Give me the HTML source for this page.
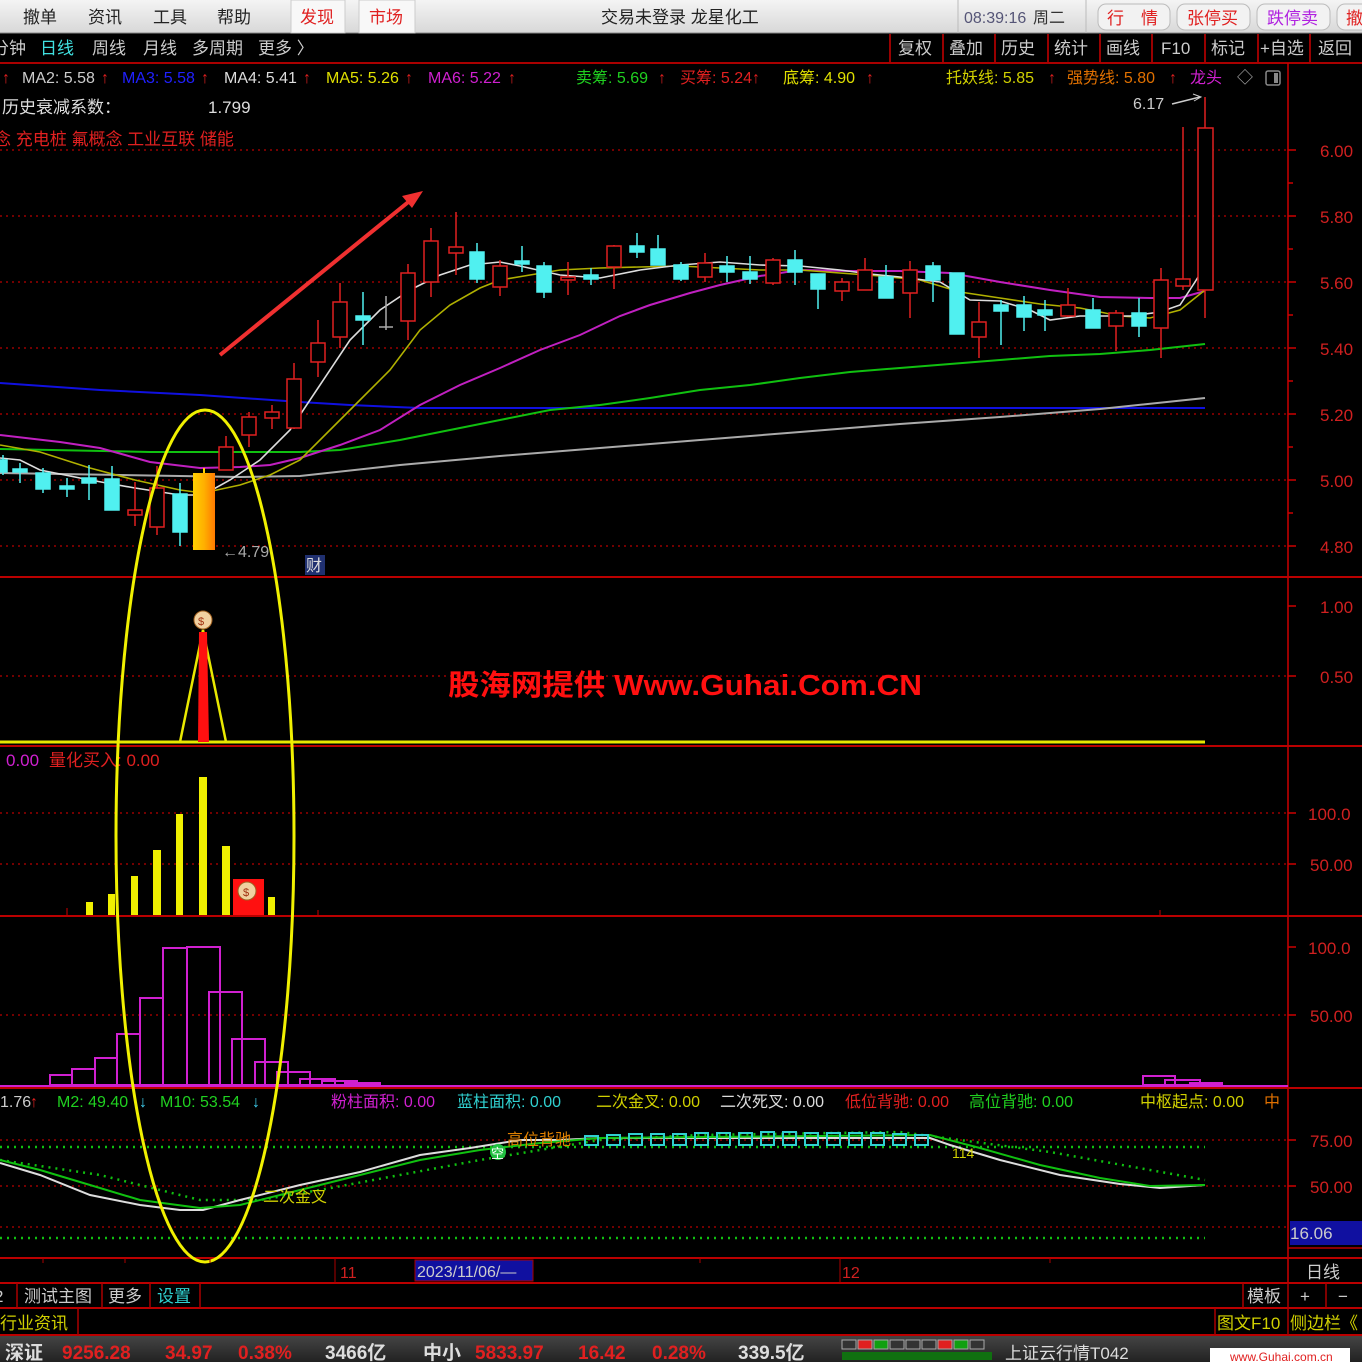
<!DOCTYPE html>
<html><head><meta charset="utf-8"><style>
html,body{margin:0;padding:0;background:#000;width:1362px;height:1362px;overflow:hidden}
svg{display:block}
text{font-family:"Liberation Sans","Noto Sans CJK SC",sans-serif}
</style></head><body>
<svg width="1362" height="1362" viewBox="0 0 1362 1362" xmlns="http://www.w3.org/2000/svg">
<defs>
<linearGradient id="tb" x1="0" y1="0" x2="0" y2="1"><stop offset="0" stop-color="#f4f4f4"/><stop offset="1" stop-color="#d8d8d8"/></linearGradient>
<linearGradient id="og" x1="0" y1="0" x2="1" y2="0"><stop offset="0" stop-color="#ffd000"/><stop offset="0.5" stop-color="#ffb000"/><stop offset="1" stop-color="#ff7a00"/></linearGradient>
<linearGradient id="sb" x1="0" y1="0" x2="0" y2="1"><stop offset="0" stop-color="#444"/><stop offset="1" stop-color="#222"/></linearGradient>
</defs>
<rect width="1362" height="1362" fill="#000"/>
<rect x="0" y="0" width="1362" height="33" fill="url(#tb)"/>
<line x1="0" y1="33" x2="1362" y2="33" stroke="#888"/>
<g font-size="17" fill="#222">
<text x="23" y="23">撤单</text><text x="88" y="23">资讯</text><text x="153" y="23">工具</text><text x="217" y="23">帮助</text>
</g>
<rect x="291" y="0" width="54" height="33" fill="#f8f8f8" stroke="#ccc"/>
<rect x="359" y="0" width="56" height="33" fill="#f8f8f8" stroke="#ccc"/>
<text x="300" y="23" font-size="17" fill="#e02020">发现</text>
<text x="369" y="23" font-size="17" fill="#e02020">市场</text>
<text x="601" y="23" font-size="17" fill="#222">交易未登录  龙星化工</text>
<line x1="958" y1="0" x2="958" y2="33" stroke="#bbb"/><line x1="1086" y1="0" x2="1086" y2="33" stroke="#bbb"/>
<text x="964" y="23" font-size="16" fill="#557">08:39:16</text><text x="1033" y="23" font-size="16" fill="#333">周二</text>
<g font-size="17">
<rect x="1098" y="4" width="72" height="26" rx="8" fill="#f2f2f2" stroke="#bbb"/><text x="1107" y="24" fill="#e02020">行　情</text>
<rect x="1177" y="4" width="73" height="26" rx="8" fill="#f2f2f2" stroke="#bbb"/><text x="1187" y="24" fill="#e02020">张停买</text>
<rect x="1257" y="4" width="73" height="26" rx="8" fill="#f2f2f2" stroke="#bbb"/><text x="1267" y="24" fill="#b020e0">跌停卖</text>
<rect x="1337" y="4" width="40" height="26" rx="8" fill="#f2f2f2" stroke="#bbb"/><text x="1346" y="24" fill="#e02020">撤</text>
</g>
<g font-size="17" fill="#ccc">
<text x="-8" y="54">分钟</text><text x="40" y="54" fill="#40e0e0">日线</text><text x="92" y="54">周线</text><text x="143" y="54">月线</text><text x="192" y="54">多周期</text><text x="258" y="54">更多 〉</text>
<text x="898" y="54">复权</text><text x="949" y="54">叠加</text><text x="1001" y="54">历史</text><text x="1054" y="54">统计</text><text x="1106" y="54">画线</text><text x="1161" y="54">F10</text><text x="1211" y="54">标记</text><text x="1260" y="54">+自选</text><text x="1318" y="54">返回</text>
</g>
<g stroke="#c00" stroke-width="1.5">
<line x1="890" y1="34" x2="890" y2="62"/><line x1="943" y1="34" x2="943" y2="62"/><line x1="995" y1="34" x2="995" y2="62"/><line x1="1048" y1="34" x2="1048" y2="62"/><line x1="1100" y1="34" x2="1100" y2="62"/><line x1="1152" y1="34" x2="1152" y2="62"/><line x1="1205" y1="34" x2="1205" y2="62"/><line x1="1258" y1="34" x2="1258" y2="62"/><line x1="1310" y1="34" x2="1310" y2="62"/>
</g>
<line x1="0" y1="63" x2="1362" y2="63" stroke="#a00" stroke-width="2"/>
<line x1="1288" y1="63" x2="1288" y2="1283" stroke="#c00" stroke-width="1.5"/>
<g stroke="#b00" stroke-width="2">
<line x1="0" y1="577" x2="1362" y2="577"/><line x1="0" y1="746" x2="1362" y2="746"/><line x1="0" y1="916" x2="1362" y2="916"/><line x1="0" y1="1088" x2="1362" y2="1088"/><line x1="0" y1="1258" x2="1362" y2="1258"/><line x1="0" y1="1283" x2="1362" y2="1283"/><line x1="0" y1="1308" x2="1362" y2="1308"/><line x1="0" y1="1335" x2="1362" y2="1335"/>
</g>
<g stroke="#900" stroke-width="1.5" stroke-dasharray="2,4">
<line x1="0" y1="150" x2="1288" y2="150"/><line x1="0" y1="216" x2="1288" y2="216"/><line x1="0" y1="282" x2="1288" y2="282"/><line x1="0" y1="348" x2="1288" y2="348"/><line x1="0" y1="414" x2="1288" y2="414"/><line x1="0" y1="480" x2="1288" y2="480"/><line x1="0" y1="546" x2="1288" y2="546"/>
<line x1="0" y1="676" x2="1288" y2="676"/>
<line x1="0" y1="813" x2="1288" y2="813"/><line x1="0" y1="864" x2="1288" y2="864"/>
<line x1="0" y1="1015" x2="1288" y2="1015"/>
<line x1="0" y1="1140" x2="1288" y2="1140"/><line x1="0" y1="1186" x2="1288" y2="1186"/><line x1="0" y1="1227" x2="1288" y2="1227"/>
</g>
<g font-size="17" fill="#d02020">
<text x="1320" y="157">6.00</text><text x="1320" y="223">5.80</text><text x="1320" y="289">5.60</text><text x="1320" y="355">5.40</text><text x="1320" y="421">5.20</text><text x="1320" y="487">5.00</text><text x="1320" y="553">4.80</text>
<text x="1320" y="613">1.00</text><text x="1320" y="683">0.50</text>
<text x="1308" y="820">100.0</text><text x="1310" y="871">50.00</text>
<text x="1308" y="954">100.0</text><text x="1310" y="1022">50.00</text>
<text x="1310" y="1147">75.00</text><text x="1310" y="1193">50.00</text>
</g>
<g stroke="#c00" stroke-width="1.5">
<line x1="1288" y1="150" x2="1296" y2="150"/><line x1="1288" y1="216" x2="1296" y2="216"/><line x1="1288" y1="282" x2="1296" y2="282"/><line x1="1288" y1="348" x2="1296" y2="348"/><line x1="1288" y1="414" x2="1296" y2="414"/><line x1="1288" y1="480" x2="1296" y2="480"/><line x1="1288" y1="546" x2="1296" y2="546"/>
<line x1="1288" y1="183" x2="1293" y2="183"/><line x1="1288" y1="249" x2="1293" y2="249"/><line x1="1288" y1="315" x2="1293" y2="315"/><line x1="1288" y1="381" x2="1293" y2="381"/><line x1="1288" y1="447" x2="1293" y2="447"/><line x1="1288" y1="513" x2="1293" y2="513"/>
<line x1="1288" y1="606" x2="1296" y2="606"/><line x1="1288" y1="676" x2="1296" y2="676"/><line x1="1288" y1="813" x2="1296" y2="813"/><line x1="1288" y1="864" x2="1296" y2="864"/><line x1="1288" y1="947" x2="1296" y2="947"/><line x1="1288" y1="1015" x2="1296" y2="1015"/><line x1="1288" y1="1140" x2="1296" y2="1140"/><line x1="1288" y1="1186" x2="1296" y2="1186"/>
</g>
<rect x="1290" y="1221" width="72" height="24" fill="#1010a0"/>
<text x="1290" y="1239" font-size="17" fill="#ccc">16.06</text>
<line x1="1288" y1="1248" x2="1362" y2="1248" stroke="#b00" stroke-width="1.5"/>
<g font-size="16">
<text x="2" y="83" fill="#e02020">↑</text>
<text x="22" y="83" fill="#ccc">MA2: 5.58</text><text x="101" y="83" fill="#e02020">↑</text>
<text x="122" y="83" fill="#2020ff">MA3: 5.58</text><text x="201" y="83" fill="#e02020">↑</text>
<text x="224" y="83" fill="#ddd">MA4: 5.41</text><text x="303" y="83" fill="#e02020">↑</text>
<text x="326" y="83" fill="#e0e000">MA5: 5.26</text><text x="405" y="83" fill="#e02020">↑</text>
<text x="428" y="83" fill="#d020d0">MA6: 5.22</text><text x="508" y="83" fill="#e02020">↑</text>
<text x="576" y="83" fill="#20d020">卖筹: 5.69</text><text x="658" y="83" fill="#e02020">↑</text>
<text x="680" y="83" fill="#e02020">买筹: 5.24↑</text>
<text x="783" y="83" fill="#e0e000">底筹: 4.90</text><text x="866" y="83" fill="#e02020">↑</text>
<text x="946" y="83" fill="#d0d000">托妖线: 5.85</text><text x="1048" y="83" fill="#e02020">↑</text>
<text x="1067" y="83" fill="#e07000">强势线: 5.80</text><text x="1169" y="83" fill="#e02020">↑</text>
<text x="1190" y="83" fill="#d020d0">龙头</text><text x="1237" y="83" fill="#aaa">◇</text>
</g>
<rect x="1266" y="71" width="14" height="14" rx="2" fill="none" stroke="#888" stroke-width="1.5"/><rect x="1274" y="73" width="4" height="10" fill="#888"/>
<text x="2" y="113" font-size="17" fill="#ddd">历史衰减系数：</text>
<text x="208" y="113" font-size="17" fill="#ddd">1.799</text>
<text x="-6" y="145" font-size="17" fill="#e02020">念 充电桩 氟概念 工业互联 储能</text>
<g fill="none" stroke-width="1.6">
<polyline stroke="#1010e0" stroke-width="2" points="0,383 100,390 200,395 300,402 350,405 420,408 600,408 800,408 1000,408 1205,408"/>
<polyline stroke="#aaa" stroke-width="2" points="0,473 240,477 300,476 400,465 500,456 600,448 700,440 800,432 900,424 1000,417 1100,409 1205,398"/>
<polyline stroke="#10c010" stroke-width="2" points="0,449 150,452 300,452 340,450 400,440 450,430 500,420 550,410 600,405 650,398 700,390 750,385 800,378 850,372 900,368 950,364 1000,360 1050,356 1100,354 1150,350 1205,344"/>
<polyline stroke="#c020c0" stroke-width="2" points="0,435 60,442 100,448 150,462 200,468 240,467 270,465 300,458 340,445 380,430 420,405 460,385 500,368 540,350 580,335 620,316 650,305 690,293 720,285 760,276 800,270 850,271 900,271 950,273 1000,282 1050,290 1100,297 1150,298 1180,298 1205,291"/>
<polyline stroke="#b0b000" points="0,445 40,452 90,468 135,480 180,490 203,493 240,485 270,475 300,460 330,430 360,400 390,370 420,330 450,305 480,288 500,280 530,275 560,270 600,268 640,267 680,266 720,268 760,270 800,270 840,273 880,276 920,280 960,292 1000,298 1040,304 1080,308 1120,316 1150,318 1180,310 1205,290"/>
<polyline stroke="#ddd" points="0,458 20,460 40,470 90,480 135,488 180,495 203,495 230,480 260,460 290,430 320,385 350,340 380,310 410,290 440,275 470,265 500,262 520,266 560,275 600,278 640,270 680,265 720,262 760,265 800,266 840,270 870,274 900,277 940,282 970,300 1000,301 1030,310 1050,320 1080,316 1130,316 1160,312 1180,305 1195,282 1205,266"/>
</g>
<g stroke-width="1.5">
<g stroke="#50f0f0" fill="#50f0f0">
<line x1="3" y1="455" x2="3" y2="475"/><rect x="-4" y="460" width="11" height="12"/>
<line x1="20" y1="463" x2="20" y2="483"/><rect x="13" y="469" width="14" height="3"/>
<line x1="43" y1="468" x2="43" y2="493"/><rect x="36" y="473" width="14" height="16"/>
<line x1="67" y1="478" x2="67" y2="497"/><rect x="60" y="486" width="14" height="3"/>
<line x1="89" y1="465" x2="89" y2="500"/><rect x="82" y="478" width="14" height="5"/>
<line x1="112" y1="466" x2="112" y2="510"/><rect x="105" y="479" width="14" height="31"/>
<line x1="180" y1="483" x2="180" y2="546"/><rect x="173" y="494" width="14" height="38"/>
<line x1="363" y1="292" x2="363" y2="345"/><rect x="356" y="316" width="14" height="4"/>
<line x1="477" y1="243" x2="477" y2="283"/><rect x="470" y="252" width="14" height="27"/>
<line x1="522" y1="246" x2="522" y2="272"/><rect x="515" y="261" width="14" height="3"/>
<line x1="544" y1="262" x2="544" y2="298"/><rect x="537" y="266" width="14" height="26"/>
<line x1="591" y1="268" x2="591" y2="285"/><rect x="584" y="275" width="14" height="4"/>
<line x1="637" y1="233" x2="637" y2="258"/><rect x="630" y="246" width="14" height="6"/>
<line x1="658" y1="235" x2="658" y2="265"/><rect x="651" y="249" width="14" height="16"/>
<line x1="681" y1="262" x2="681" y2="281"/><rect x="674" y="265" width="14" height="14"/>
<line x1="727" y1="256" x2="727" y2="282"/><rect x="720" y="266" width="14" height="6"/>
<line x1="750" y1="256" x2="750" y2="284"/><rect x="743" y="272" width="14" height="7"/>
<line x1="795" y1="250" x2="795" y2="285"/><rect x="788" y="260" width="14" height="12"/>
<line x1="818" y1="274" x2="818" y2="309"/><rect x="811" y="274" width="14" height="15"/>
<line x1="886" y1="265" x2="886" y2="298"/><rect x="879" y="277" width="14" height="21"/>
<line x1="933" y1="262" x2="933" y2="302"/><rect x="926" y="266" width="14" height="14"/>
<line x1="957" y1="273" x2="957" y2="334"/><rect x="950" y="273" width="14" height="61"/>
<line x1="1001" y1="300" x2="1001" y2="345"/><rect x="994" y="305" width="14" height="6"/>
<line x1="1024" y1="296" x2="1024" y2="331"/><rect x="1017" y="305" width="14" height="12"/>
<line x1="1045" y1="300" x2="1045" y2="331"/><rect x="1038" y="310" width="14" height="5"/>
<line x1="1093" y1="298" x2="1093" y2="328"/><rect x="1086" y="310" width="14" height="18"/>
<line x1="1139" y1="298" x2="1139" y2="337"/><rect x="1132" y="313" width="14" height="13"/>
</g>
<g stroke="#e02020" fill="#000">
<line x1="135" y1="482" x2="135" y2="526"/><rect x="128" y="510" width="14" height="5"/>
<line x1="157" y1="466" x2="157" y2="535"/><rect x="150" y="488" width="14" height="39"/>
<line x1="226" y1="436" x2="226" y2="470"/><rect x="219" y="447" width="14" height="23"/>
<line x1="249" y1="412" x2="249" y2="447"/><rect x="242" y="417" width="14" height="18"/>
<line x1="272" y1="405" x2="272" y2="429"/><rect x="265" y="412" width="14" height="6"/>
<line x1="294" y1="363" x2="294" y2="429"/><rect x="287" y="379" width="14" height="49"/>
<line x1="318" y1="320" x2="318" y2="377"/><rect x="311" y="343" width="14" height="19"/>
<line x1="340" y1="283" x2="340" y2="348"/><rect x="333" y="302" width="14" height="35"/>
<line x1="408" y1="264" x2="408" y2="340"/><rect x="401" y="273" width="14" height="48"/>
<line x1="431" y1="228" x2="431" y2="297"/><rect x="424" y="241" width="14" height="41"/>
<line x1="456" y1="212" x2="456" y2="275"/><rect x="449" y="247" width="14" height="6"/>
<line x1="500" y1="260" x2="500" y2="296"/><rect x="493" y="266" width="14" height="21"/>
<line x1="568" y1="262" x2="568" y2="295"/><rect x="561" y="277" width="14" height="3"/>
<line x1="614" y1="245" x2="614" y2="289"/><rect x="607" y="246" width="14" height="21"/>
<line x1="705" y1="253" x2="705" y2="282"/><rect x="698" y="263" width="14" height="14"/>
<line x1="773" y1="258" x2="773" y2="285"/><rect x="766" y="260" width="14" height="23"/>
<line x1="842" y1="278" x2="842" y2="301"/><rect x="835" y="282" width="14" height="9"/>
<line x1="865" y1="258" x2="865" y2="290"/><rect x="858" y="270" width="14" height="20"/>
<line x1="910" y1="261" x2="910" y2="318"/><rect x="903" y="270" width="14" height="23"/>
<line x1="979" y1="302" x2="979" y2="358"/><rect x="972" y="322" width="14" height="15"/>
<line x1="1068" y1="288" x2="1068" y2="317"/><rect x="1061" y="305" width="14" height="11"/>
<line x1="1116" y1="310" x2="1116" y2="351"/><rect x="1109" y="313" width="14" height="13"/>
<line x1="1161" y1="268" x2="1161" y2="358"/><rect x="1154" y="280" width="14" height="48"/>
<line x1="1183" y1="127" x2="1183" y2="290"/><rect x="1176" y="279" width="14" height="7"/>
<line x1="1205" y1="97" x2="1205" y2="318"/><rect x="1198" y="128" width="15" height="162"/>
</g>
<line x1="386" y1="296" x2="386" y2="330" stroke="#aaa"/><line x1="379" y1="327" x2="393" y2="327" stroke="#aaa"/>
<rect x="193" y="473" width="22" height="77" fill="url(#og)" stroke="none"/>
<line x1="204" y1="468" x2="204" y2="473" stroke="#ffd000" stroke-width="2"/>
</g>
<text x="222" y="557" font-size="16" fill="#aaa">←4.79</text>
<text x="1133" y="109" font-size="16" fill="#ccc">6.17</text>
<path d="M1172,104 L1200,97" stroke="#ccc" stroke-width="1.5" fill="none"/><path d="M1193,94 L1201,97 L1194,101" stroke="#ccc" fill="none"/>
<rect x="305" y="555" width="20" height="20" fill="#203070"/><text x="306" y="571" font-size="16" fill="#ddd">财</text>
<line x1="220" y1="355" x2="412" y2="199" stroke="#f03030" stroke-width="4"/>
<polygon points="423,191 402,196 412,208" fill="#f03030"/>
<line x1="0" y1="742" x2="1205" y2="742" stroke="#e8e800" stroke-width="3"/>
<polyline points="180,742 203,630 226,742" fill="none" stroke="#e8e800" stroke-width="2.5"/>
<polygon points="198,742 199,632 207,632 209,742" fill="#ff1010"/>
<circle cx="203" cy="620" r="9" fill="#f0d0a0" stroke="#a06020"/><text x="198" y="625" font-size="11" fill="#a03010">$</text>
<text x="448" y="695" font-size="29" font-weight="bold" fill="#ff1010" textLength="474" lengthAdjust="spacingAndGlyphs">股海网提供 Www.Guhai.Com.CN</text>
<text x="6" y="766" font-size="17" fill="#d020d0">0.00</text>
<text x="49" y="766" font-size="17" fill="#e02020">量化买入: 0.00</text>
<g fill="#f0f000">
<rect x="86" y="902" width="7" height="13"/><rect x="108" y="894" width="7" height="21"/><rect x="131" y="876" width="7" height="39"/><rect x="153" y="850" width="8" height="65"/><rect x="176" y="814" width="7" height="101"/><rect x="199" y="777" width="8" height="138"/><rect x="222" y="846" width="8" height="69"/><rect x="268" y="897" width="7" height="18"/>
</g>
<rect x="233" y="879" width="31" height="36" fill="#ff1010"/>
<circle cx="247" cy="891" r="9" fill="#f0d0a0" stroke="#a06020"/><text x="243" y="896" font-size="11" fill="#a03010">$</text>
<g stroke="#c00"><line x1="67" y1="908" x2="67" y2="915"/><line x1="318" y1="910" x2="318" y2="915"/><line x1="1160" y1="910" x2="1160" y2="915"/></g>
<g fill="none" stroke="#d020d0" stroke-width="2">
<rect x="50" y="1075" width="22" height="10"/><rect x="72" y="1069" width="23" height="16"/><rect x="95" y="1058" width="22" height="27"/><rect x="117" y="1034" width="23" height="51"/><rect x="140" y="998" width="23" height="87"/><rect x="163" y="948" width="24" height="137"/><rect x="187" y="947" width="33" height="138"/><rect x="209" y="992" width="33" height="93"/><rect x="232" y="1039" width="33" height="46"/><rect x="255" y="1062" width="33" height="23"/><rect x="277" y="1072" width="33" height="13"/><rect x="300" y="1079" width="35" height="6"/><rect x="322" y="1081" width="35" height="4"/><rect x="345" y="1083" width="35" height="2"/>
<rect x="1143" y="1076" width="32" height="9"/><rect x="1165" y="1080" width="35" height="5"/><rect x="1190" y="1083" width="32" height="2"/>
</g>
<line x1="0" y1="1086" x2="1288" y2="1086" stroke="#d020d0" stroke-width="2"/>
<g font-size="16">
<text x="0" y="1107" fill="#ccc">1.76</text><text x="30" y="1107" fill="#e02020">↑</text>
<text x="57" y="1107" fill="#20d020">M2: 49.40</text><text x="139" y="1107" fill="#40d0f0">↓</text>
<text x="160" y="1107" fill="#20d020">M10: 53.54</text><text x="252" y="1107" fill="#40d0f0">↓</text>
<text x="331" y="1107" fill="#d020d0">粉柱面积: 0.00</text>
<text x="457" y="1107" fill="#30d0d0">蓝柱面积: 0.00</text>
<text x="596" y="1107" fill="#d0d000">二次金叉: 0.00</text>
<text x="720" y="1107" fill="#ddd">二次死叉: 0.00</text>
<text x="845" y="1107" fill="#e02020">低位背驰: 0.00</text>
<text x="969" y="1107" fill="#20d020">高位背驰: 0.00</text>
<text x="1140" y="1107" fill="#d0d000">中枢起点: 0.00</text><text x="1264" y="1107" fill="#e07000">中</text>
</g>
<g stroke="#10c010" stroke-width="2.5" stroke-dasharray="2,5" fill="none">
<line x1="0" y1="1147" x2="1205" y2="1147"/><line x1="0" y1="1238" x2="1205" y2="1238"/>
<polyline points="0,1160 100,1175 200,1200 260,1200 320,1190 400,1175 480,1160 540,1150 600,1140 700,1135 900,1132 960,1140 1050,1152 1150,1170 1205,1180"/>
</g>
<polyline fill="none" stroke="#ddd" stroke-width="2" points="0,1163 40,1175 90,1195 140,1205 180,1210 203,1210 240,1200 300,1185 360,1172 420,1155 470,1148 520,1140 560,1140 600,1138 930,1138 950,1145 1000,1160 1060,1175 1120,1184 1160,1188 1205,1185"/>
<polyline fill="none" stroke="#10c010" stroke-width="2" points="0,1160 40,1170 90,1185 140,1200 200,1208 240,1205 300,1190 360,1175 420,1160 480,1150 540,1143 600,1138 930,1135 980,1148 1040,1165 1100,1178 1150,1186 1205,1185"/>
<g fill="none" stroke="#30d0d0" stroke-width="2">
<rect x="585" y="1136" width="13" height="9"/><rect x="607" y="1135" width="13" height="10"/><rect x="629" y="1134" width="13" height="11"/><rect x="651" y="1134" width="13" height="11"/><rect x="673" y="1134" width="13" height="11"/><rect x="695" y="1133" width="13" height="12"/><rect x="717" y="1133" width="13" height="12"/><rect x="739" y="1133" width="13" height="12"/><rect x="761" y="1132" width="13" height="13"/><rect x="783" y="1132" width="13" height="13"/><rect x="805" y="1133" width="13" height="12"/><rect x="827" y="1133" width="13" height="12"/><rect x="849" y="1133" width="13" height="12"/><rect x="871" y="1133" width="13" height="12"/><rect x="893" y="1134" width="13" height="11"/><rect x="915" y="1135" width="13" height="10"/>
</g>
<text x="507" y="1145" font-size="16" fill="#e08000">高位背驰</text>
<circle cx="498" cy="1152" r="8" fill="#20c040"/><text x="491" y="1158" font-size="13" fill="#fff">空</text>
<text x="263" y="1202" font-size="16" fill="#d0d000">二次金叉</text>
<text x="952" y="1158" font-size="14" fill="#d0d000">114</text>
<ellipse cx="205" cy="836" rx="89" ry="426" fill="none" stroke="#f0f000" stroke-width="3"/>
<g stroke="#a00"><line x1="43" y1="1258" x2="43" y2="1263"/><line x1="125" y1="1258" x2="125" y2="1263"/><line x1="210" y1="1258" x2="210" y2="1263"/><line x1="335" y1="1258" x2="335" y2="1283"/><line x1="840" y1="1258" x2="840" y2="1283"/><line x1="700" y1="1258" x2="700" y2="1263"/><line x1="1050" y1="1258" x2="1050" y2="1263"/></g>
<text x="340" y="1278" font-size="16" fill="#d02020">11</text>
<rect x="415" y="1260" width="118" height="21" fill="#1010a0" stroke="#a00"/>
<text x="417" y="1277" font-size="16" fill="#ccc">2023/11/06/—</text>
<text x="842" y="1278" font-size="16" fill="#d02020">12</text>
<text x="1306" y="1278" font-size="17" fill="#ccc">日线</text>
<g stroke="#a00" stroke-width="1.5">
<line x1="17" y1="1283" x2="17" y2="1308"/><line x1="102" y1="1283" x2="102" y2="1308"/><line x1="150" y1="1283" x2="150" y2="1308"/><line x1="200" y1="1283" x2="200" y2="1308"/><line x1="1243" y1="1283" x2="1243" y2="1308"/><line x1="1288" y1="1283" x2="1288" y2="1308"/><line x1="1326" y1="1283" x2="1326" y2="1308"/>
<line x1="78" y1="1308" x2="78" y2="1335"/><line x1="1215" y1="1308" x2="1215" y2="1335"/><line x1="1288" y1="1308" x2="1288" y2="1335"/>
</g>
<g font-size="17">
<text x="-6" y="1302" fill="#ccc">2</text><text x="24" y="1302" fill="#ccc">测试主图</text><text x="108" y="1302" fill="#ccc">更多</text><text x="157" y="1302" fill="#30d0d0">设置</text>
<text x="1247" y="1302" fill="#ccc">模板</text><text x="1300" y="1302" fill="#ccc">+</text><text x="1338" y="1302" fill="#ccc">−</text>
<text x="0" y="1329" fill="#d0d000">行业资讯</text>
<text x="1217" y="1329" fill="#d0d000">图文F10</text><text x="1290" y="1329" fill="#d0d000">侧边栏《</text>
</g>
<rect x="0" y="1336" width="1362" height="26" fill="url(#sb)"/>
<g font-size="19" font-weight="bold">
<text x="5" y="1359" fill="#ddd">深证</text>
<text x="62" y="1359" fill="#e02020">9256.28</text>
<text x="165" y="1359" fill="#e02020">34.97</text>
<text x="238" y="1359" fill="#e02020">0.38%</text>
<text x="325" y="1359" fill="#ddd">3466亿</text>
<text x="423" y="1359" fill="#ddd">中小</text>
<text x="475" y="1359" fill="#e02020">5833.97</text>
<text x="578" y="1359" fill="#e02020">16.42</text>
<text x="652" y="1359" fill="#e02020">0.28%</text>
<text x="738" y="1359" fill="#ddd">339.5亿</text>
</g>
<g stroke="#aaa" fill="#333">
<rect x="842" y="1340" width="14" height="9"/><rect x="858" y="1340" width="14" height="9" fill="#e02020"/><rect x="874" y="1340" width="14" height="9" fill="#10a010"/><rect x="890" y="1340" width="14" height="9"/><rect x="906" y="1340" width="14" height="9"/>
<rect x="922" y="1340" width="14" height="9"/><rect x="938" y="1340" width="14" height="9" fill="#e02020"/><rect x="954" y="1340" width="14" height="9" fill="#10a010"/><rect x="970" y="1340" width="14" height="9"/>
</g>
<rect x="842" y="1352" width="150" height="8" fill="#107010"/>
<text x="1005" y="1359" font-size="17" fill="#ddd">上证云行情T042</text>
<rect x="1210" y="1348" width="140" height="14" fill="#fff"/>
<text x="1230" y="1361" font-size="12" fill="#e02020">www.Guhai.com.cn</text>
</svg>
</body></html>
